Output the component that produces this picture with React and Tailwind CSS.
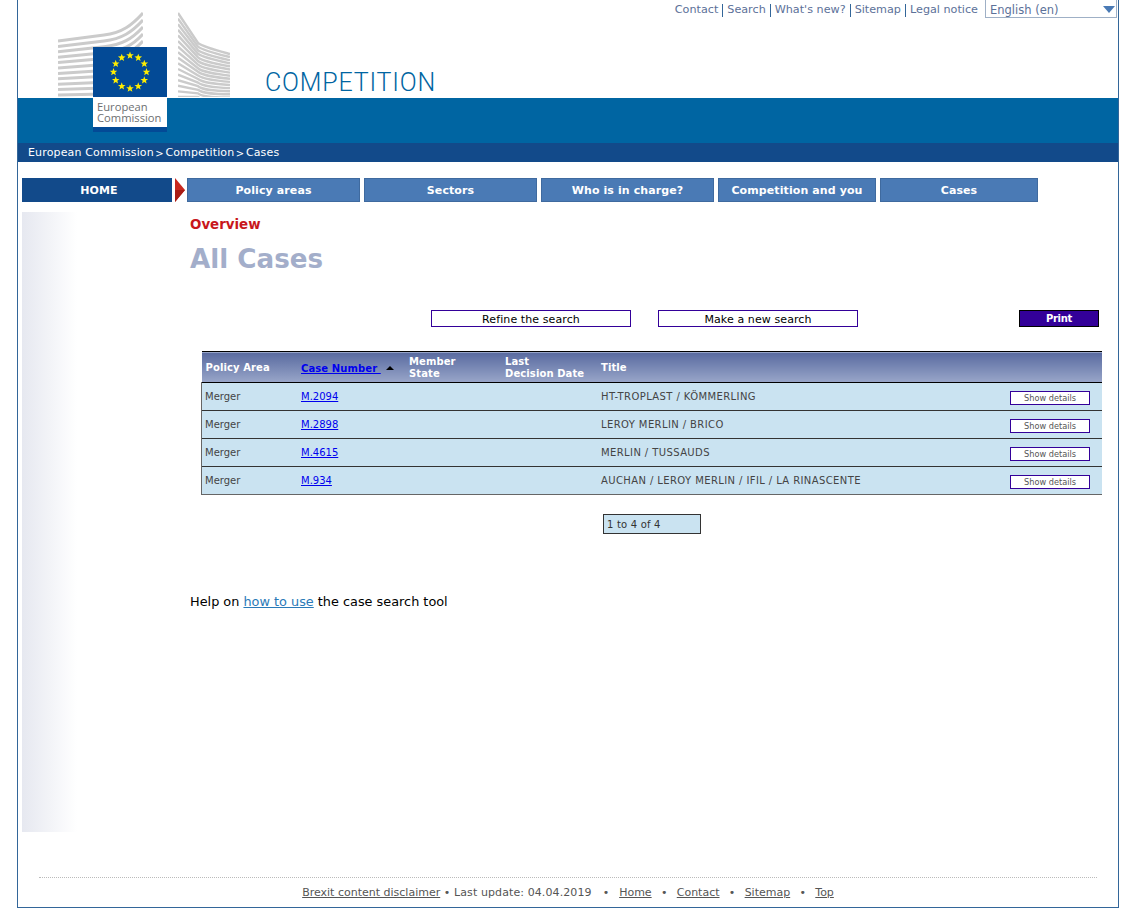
const F = { fontFamily: '"DejaVu Sans", Verdana, sans-serif' };

function Star({ cx, cy, r }) {
  const pts = [];
  for (let i = 0; i < 10; i++) {
    const a = -Math.PI / 2 + (i * Math.PI) / 5;
    const q = i % 2 ? r * 0.42 : r;
    pts.push(`${(cx + q * Math.cos(a)).toFixed(2)},${(cy + q * Math.sin(a)).toFixed(2)}`);
  }
  return <polygon points={pts.join(" ")} fill="#ffed00" />;
}

function Building() {
  const left = [];
  for (let i = 0; i < 12; i++) {
    const y0 = 41 + i * 5.4;
    const ym = 35 + i * 5.9;
    const e = 13 + i * 7;
    left.push(`M58 ${y0} L104 ${ym} C122 ${ym - 2} 132 ${e + 12} 143 ${e}`);
  }
  const right = [];
  for (let i = 0; i < 16; i++) {
    const y0 = 13 + i * 5.6;
    const ym = 43 + i * 3.6;
    const e = 54 + i * 3.1;
    right.push(`M178 ${y0} L198 ${ym} C203 ${ym + 4} 215 ${ym + 7 - i * 0.2} 230 ${e}`);
  }
  return (
    <svg className="absolute left-0 top-0" width="230" height="98" viewBox="18 0 230 98">
      <clipPath id="lc"><rect x="58" y="0" width="85" height="97" /></clipPath>
      <clipPath id="rc"><rect x="178" y="0" width="52" height="97" /></clipPath>
      <g clipPath="url(#lc)" fill="none" stroke="#cbcbcb" strokeWidth="3">
        {left.map((d, i) => <path key={i} d={d} />)}
      </g>
      <g clipPath="url(#rc)" fill="none" stroke="#cbcbcb" strokeWidth="2.4">
        {right.map((d, i) => <path key={i} d={d} />)}
      </g>
    </svg>
  );
}

function Logo() {
  const stars = [];
  for (let i = 0; i < 12; i++) {
    const a = (i * Math.PI) / 6;
    stars.push(<Star key={i} cx={37 + 16.5 * Math.sin(a)} cy={25 - 16.5 * Math.cos(a)} r={4} />);
  }
  return (
    <div className="absolute left-[75px] top-[47px] w-[75px]">
      <div className="h-[50px] w-[74px] bg-[#034a96]">
        <svg width="74" height="50" viewBox="0 0 74 50">{stars}</svg>
      </div>
      <div className="mt-px h-[29px] w-[74px] bg-white pl-[4px] pt-[3px] text-[11.2px] leading-[11px] text-[#6d6f72]" style={{ fontFamily: '"Open Sans", sans-serif' }}>
        European<br />Commission
      </div>
      <div className="h-[5px] w-[74px] bg-[#034a96]" />
    </div>
  );
}

function TopLinks() {
  const items = ["Contact", "Search", "What's new?", "Sitemap", "Legal notice"];
  return (
    <div className="absolute right-[1px] top-[-1px] flex items-start">
      <div className="flex h-[20px] items-center pt-[3px] text-[11.2px] text-[#5c7199]">
        {items.map((t, i) => (
          <span key={t} className="flex items-center">
            {i > 0 && <span className="mx-[4px] h-[13px] w-px bg-[#336699]" />}
            <a>{t}</a>
          </span>
        ))}
      </div>
      <div className="relative ml-[7px] h-[19px] w-[132px] border border-[#9fb0c6] bg-white pl-[4px] text-[11.5px] leading-[20px] text-[#5c7199]">
        English (en)
        <svg className="absolute right-[1px] top-[6px]" width="12" height="7" viewBox="0 0 12 7">
          <polygon points="0,0 12,0 6,7" fill="#4a7ab5" />
        </svg>
      </div>
    </div>
  );
}

function Nav() {
  const items = [
    ["Policy areas", "w-[173px]"],
    ["Sectors", "w-[173px]"],
    ["Who is in charge?", "w-[173px]"],
    ["Competition and you", "w-[158px]"],
    ["Cases", "w-[158px]"],
  ];
  return (
    <div className="mt-[16px] ml-[4px] flex h-[24px] items-stretch">
      <div className="flex w-[150px] items-center justify-center bg-[#124a8a] pl-[4px] pt-[2px] text-[11px] font-bold tracking-[0.1px] text-white">HOME</div>
      <svg className="ml-[3px] mr-[2px]" width="10" height="24" viewBox="0 0 10 24">
        <polygon points="0,0 10,12 0,24" fill="#c8281e" />
        <polygon points="0,12 10,12 0,24" fill="#a81c14" />
      </svg>
      <div className="flex gap-[4px]">
        {items.map(([t, w]) => (
          <div key={t} className={`flex ${w} items-center justify-center border border-[#3f6a9f] bg-[#4a7ab5] pt-[2px] text-[11px] font-bold tracking-[0.1px] text-white`}>{t}</div>
        ))}
      </div>
    </div>
  );
}

function OutlineButton({ children, className }) {
  return <div className={`flex h-[17px] w-[200px] items-center justify-center border border-[#330099] bg-white pt-[3px] text-[11px] tracking-[0.1px] text-black ${className || ""}`}>{children}</div>;
}

const rows = [
  ["M.2094", "HT-TROPLAST / KÖMMERLING"],
  ["M.2898", "LEROY MERLIN / BRICO"],
  ["M.4615", "MERLIN / TUSSAUDS"],
  ["M.934", "AUCHAN / LEROY MERLIN / IFIL / LA RINASCENTE"],
];

function CasesTable() {
  return (
    <table className="ml-[11px] w-[901px] table-fixed border-collapse text-[10px] text-[#444444]">
      <colgroup>
        <col className="w-[99.5px]" /><col className="w-[108px]" /><col className="w-[96px]" /><col className="w-[96px]" /><col /><col className="w-[92px]" />
      </colgroup>
      <thead>
        <tr className="h-[31px] border-t border-b border-black bg-gradient-to-b from-[#5a6ba0] to-[#98a5c8] text-left text-[10px] font-bold leading-[12px] tracking-[0.1px] text-white">
          <th className="pl-[4px] pt-[2px] font-bold">Policy Area</th>
          <th className="pt-[4px] font-bold">
            <a className="text-[#0000ee] underline">Case Number&nbsp;</a>
            <svg className="ml-[5px] inline-block align-[2px]" width="8" height="4" viewBox="0 0 8 4"><polygon points="4,0 8,4 0,4" fill="#000" /></svg>
          </th>
          <th className="pt-[2px] font-bold">Member<br />State</th>
          <th className="pt-[2px] font-bold">Last<br />Decision Date</th>
          <th className="pt-[2px] font-bold">Title</th>
          <th />
        </tr>
      </thead>
      <tbody>
        {rows.map(([c, t], i) => (
          <tr key={c} className={`h-[28px] border-b bg-[#cae3f1] ${i === 3 ? "border-[#666666]" : "border-[#333333]"}`}>
            <td className="border-l border-[#666666] pl-[3px]">Merger</td>
            <td><a className="text-[#0000ee] underline">{c}</a></td>
            <td />
            <td />
            <td className="tracking-[0.4px]">{t}</td>
            <td>
              <div className="mt-[3px] flex h-[14px] w-[80px] items-center justify-center border border-[#330099] bg-white pt-px text-[8.2px] text-[#555555]">Show details</div>
            </td>
          </tr>
        ))}
      </tbody>
    </table>
  );
}

function Content() {
  return (
    <div className="ml-[113px] w-[912px]">
      <div className="mt-[5px] h-[16px] text-[13.4px] font-bold leading-[16px] text-[#c8171c]">Overview</div>
      <div className="mt-[8px] h-[36px] text-[26.2px] font-bold leading-[36px] text-[#a3aeca]">All Cases</div>
      <div className="mt-[33px] flex items-start">
        <OutlineButton className="ml-[241px]">Refine the search</OutlineButton>
        <OutlineButton className="ml-[27px]">Make a new search</OutlineButton>
        <div className="ml-[161px] flex h-[17px] w-[80px] items-center justify-center border border-black bg-[#330099] text-[10px] font-bold tracking-[-0.3px] text-white">Print</div>
      </div>
      <div className="mt-[24px]"><CasesTable /></div>
      <div className="ml-[413px] mt-[19px] flex h-[20px] w-[98px] items-center border border-[#333333] bg-[#cae3f1] pl-[3px] text-[10px] tracking-[0.2px] text-[#333333]">1 to 4 of 4</div>
      <div className="mt-[60px] text-[12.85px] leading-[16px] text-black">
        Help on <a className="text-[#2a7ab8] underline">how to use</a> the case search tool
      </div>
    </div>
  );
}

function Footer() {
  return (
    <div className="mx-[21px] mt-[45px] border-t border-dotted border-[#bbbbbb] pt-[8px] text-center text-[11px] leading-[14px] text-[#555555]">
      <a className="underline">Brexit content disclaimer</a>
      <span className="tracking-[0.1px]"> • Last update: 04.04.2019</span>
      <span className="ml-[11px] mr-[10px]">•</span><a className="underline">Home</a>
      <span className="mx-[9.3px]">•</span><a className="underline">Contact</a>
      <span className="mx-[9.3px]">•</span><a className="underline">Sitemap</a>
      <span className="mx-[9.3px]">•</span><a className="underline">Top</a>
    </div>
  );
}

export default function App() {
  return (
    <div className="h-[923px] w-[1134px] bg-white" style={F}>
      <div className="ml-[17px] h-[908px] w-[1102px] border-x border-b border-[#336699]">
        <header className="relative h-[98px]">
          <Building />
          <div className="absolute left-[247px] top-[65px] text-[25px] font-light leading-[36px] tracking-[0.8px] text-[#0065a2]" style={{ fontFamily: 'Roboto, sans-serif' }}>COMPETITION</div>
          <TopLinks />
          <Logo />
        </header>
        <div className="h-[45px] bg-[#0065a2]" />
        <div className="flex h-[19px] items-center bg-[#124a8a] pl-[10px] pt-px text-[11px] tracking-[0.15px] text-white">
          European Commission<span className="mx-[1.5px] text-[10px]">&gt;</span>Competition<span className="mx-[1.5px] text-[10px]">&gt;</span>Cases
        </div>
        <Nav />
        <div className="ml-[4px] mt-[10px] flex h-[620px]">
          <div className="w-[55px] bg-gradient-to-r from-[#e6e8f0] to-white" />
          <Content />
        </div>
        <Footer />
      </div>
    </div>
  );
}
